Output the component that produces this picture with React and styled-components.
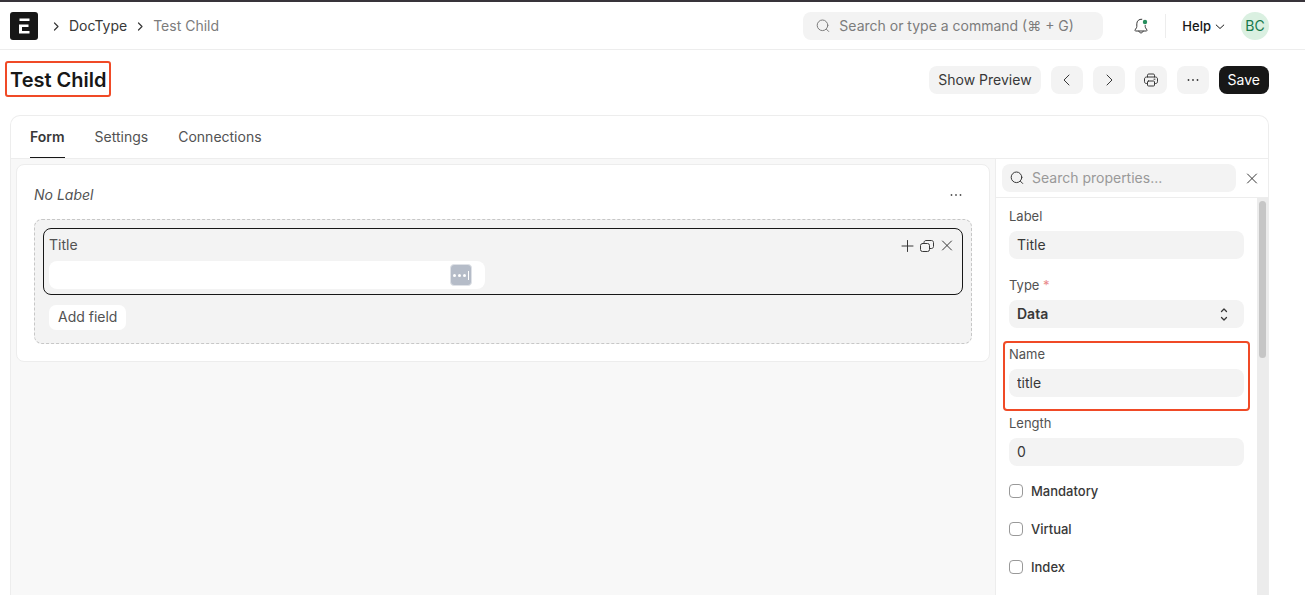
import {useId} from "react"
import styled, {createGlobalStyle} from "styled-components"

const GlobalStyle = createGlobalStyle`
  *, *::before, *::after {
    box-sizing: border-box;
  }

  body {
    margin: 0;
    background: #fff;
    color: #383838;
    font-family: Inter, "Liberation Sans", sans-serif;
    font-size: 14px;
    line-height: 18px;
  }

  button, input, select {
    font: inherit;
    color: inherit;
  }

  svg {
    display: block;
    flex: none;
  }
`

const Page = styled.div`
  display: flex;
  flex-direction: column;
  min-height: 100vh;
  border-top: 2px solid #38343a;
`

/* icons */

const Svg = ({size = 16, children, ...rest}) => (
  <svg
    width={size}
    height={size}
    viewBox="0 0 16 16"
    fill="none"
    stroke="currentColor"
    strokeLinecap="round"
    strokeLinejoin="round"
    aria-hidden="true"
    {...rest}
  >
    {children}
  </svg>
)

const SearchIcon = () => (
  <Svg>
    <circle cx="7.5" cy="7.3" r="5.3" />
    <path d="M11.5 11.3 13.700 13.500" />
  </Svg>
)

const CrumbIcon = () => (
  <Svg size={12} viewBox="0 0 12 12" strokeWidth="1.2">
    <path d="m4.5 3 3.5 3.5L4.500 10" />
  </Svg>
)

const LeftIcon = () => (
  <Svg>
    <path d="m10 3-5 5 5 5" />
  </Svg>
)

const RightIcon = () => (
  <Svg>
    <path d="m6 3 5 5-5 5" />
  </Svg>
)

const DownIcon = () => (
  <Svg size={10} viewBox="0 0 10 10">
    <path d="m1.2 4 3.8 3.500L8.800 4" />
  </Svg>
)

const BellIcon = () => (
  <Svg>
    <path d="M8.800 1.200C6 .9 3.800 3 3.800 5.800v2.700c0 .6-.2 1-.5 1.500L2.100 11.900c-.3.5 0 1.100.6 1.100h10.600c.6 0 .9-.6.6-1.100L12.700 10c-.3-.5-.5-.9-.5-1.500V7.500" />
    <path d="M5.800 13.200c.4 1.100 1.200 1.700 2.200 1.700s1.800-.6 2.200-1.700" />
    <circle cx="12" cy="4" r="2.200" fill="#278f5e" stroke="none" />
  </Svg>
)

const PrintIcon = () => (
  <Svg>
    <path d="M4.500 5V3.200c0-.7.5-1.200 1.200-1.200h4.600c.7 0 1.200.5 1.200 1.200V5" />
    <path d="M4.500 11.500H3.300c-1 0-1.800-.8-1.800-1.800V7c0-1.100.9-2 2-2h9c1.100 0 2 .9 2 2v2.700c0 1-.8 1.800-1.800 1.800h-1.200" />
    <rect x="4.500" y="9" width="7" height="5" rx="1" />
    <path d="M11 7.200h1" />
  </Svg>
)

const DotsIcon = () => (
  <Svg fill="currentColor" stroke="none">
    <circle cx="3.500" cy="8" r=".9" />
    <circle cx="8" cy="8" r=".9" />
    <circle cx="12.500" cy="8" r=".9" />
  </Svg>
)

const PlusIcon = () => (
  <Svg>
    <path d="M8.500 3.500v11M3 9h11" />
  </Svg>
)

const CopyIcon = () => (
  <Svg>
    <rect x="1.500" y="6.500" width="9" height="8" rx="2" />
    <path d="M5 6.300V5.500c0-1.100.9-2 2-2h5.500c1.100 0 2 .9 2 2v4c0 1.100-.9 2-2 2h-1.800" />
  </Svg>
)

const CloseIcon = () => (
  <Svg>
    <path d="m3.500 4 9 9m0-9-9 9" />
  </Svg>
)

const SelectIcon = () => (
  <Svg strokeWidth="1.300">
    <path d="m5.500 5.500 2.500-2.500 2.500 2.500M5.500 11.500 8 14l2.500-2.500" />
  </Svg>
)

const Logo = () => (
  <svg width="28" height="28" viewBox="0 0 28 28" aria-hidden="true">
    <rect width="28" height="28" rx="3" fill="#171717" />
    <path d="M9.500 6.500h10v2.500h-10zM9 12.500h9.500v2.500H12v4h7.500v2.500H9z" fill="#fff" />
  </svg>
)

/* navbar */

const Navbar = styled.header`
  display: flex;
  align-items: center;
  justify-content: space-between;
  height: 48px;
  padding: 0 36px 0 10px;
  border-bottom: 1px solid #ededed;
`

const NavGroup = styled.div`
  display: flex;
  align-items: center;
`

const Crumbs = styled.nav`
  display: flex;
  align-items: center;
  gap: 7px;
  margin-left: 12px;
`

const Crumb = styled.a`
  color: ${props => (props.$current ? "#7c7c7c" : "#383838")};
  text-decoration: none;
`

const NavSearch = styled.label`
  display: flex;
  align-items: center;
  gap: 8px;
  width: 300px;
  height: 28px;
  padding: 0 12px;
  border-radius: 8px;
  background: #f3f3f3;
  color: #7c7c7c;
`

const BareInput = styled.input`
  flex: 1;
  min-width: 0;
  padding: 0;
  border: 0;
  outline: 0;
  background: transparent;

  &::placeholder {
    color: ${props => props.$hint || "#7c7c7c"};
    opacity: 1;
  }
`

const PlainButton = styled.button.attrs({type: "button"})`
  display: flex;
  align-items: center;
  gap: 4px;
  padding: 0;
  border: 0;
  background: transparent;
`

const HelpButton = styled(PlainButton)`
  color: #171717;
  font-size: 13px;
  font-weight: 500;
`

const NavTools = styled.div`
  display: flex;
  align-items: center;
  gap: 16px;
  margin-left: 30px;
`

const Divider = styled.div`
  width: 1px;
  height: 24px;
  background: #ededed;
`

const Avatar = styled.button.attrs({type: "button"})`
  width: 28px;
  height: 28px;
  padding: 0;
  border: 0;
  border-radius: 50%;
  background: #daf0e1;
  color: #16794c;
`

/* page head */

const PageHead = styled.div`
  display: flex;
  align-items: center;
  justify-content: space-between;
  height: 60px;
  padding: 0 36px 0 5px;
`

const Title = styled.h1`
  margin: 0 0 2px;
  padding: 2px 3px 0;
  border: 2px solid #f04a26;
  border-radius: 3px;
  color: #171717;
  font-size: 20px;
  font-weight: 600;
  line-height: 30px;
`

const Actions = styled.div`
  display: flex;
  gap: 10px;
`

const Button = styled.button.attrs({type: "button"})`
  display: flex;
  align-items: center;
  justify-content: center;
  min-width: 32px;
  height: 28px;
  padding: 0 ${props => (props.$icon ? 8 : 9)}px;
  border: 0;
  border-radius: 8px;
  background: ${props => (props.$primary ? "#171717" : "#f3f3f3")};
  color: ${props => (props.$primary ? "#fff" : "#383838")};
`

/* form builder */

const Builder = styled.main`
  display: flex;
  flex: 1;
  flex-direction: column;
  margin: 5px 36px 0 10px;
  border: 1px solid #ededed;
  border-bottom: 0;
  border-radius: 10px 10px 0 0;
`

const Tabs = styled.div`
  display: flex;
  gap: 30px;
  padding: 0 19px;
  border-bottom: 1px solid #ededed;
`

const Tab = styled.button.attrs({type: "button", role: "tab"})`
  height: 42px;
  padding: 0;
  border: 0;
  border-bottom: 1px solid ${props => (props["aria-selected"] ? "#171717" : "transparent")};
  background: transparent;
  color: ${props => (props["aria-selected"] ? "#383838" : "#525252")};
  font-weight: ${props => (props["aria-selected"] ? 600 : 400)};
`

const Columns = styled.div`
  display: flex;
  flex: 1;
`

const Canvas = styled.div`
  flex: 1;
  min-width: 0;
  padding: 5px;
  background: #f8f8f8;
`

const Section = styled.section`
  padding: 17px;
  border: 1px solid #ededed;
  border-radius: 8px;
  background: #fff;
`

const SectionHead = styled.div`
  display: flex;
  align-items: center;
  justify-content: space-between;
  height: 26px;
  margin-bottom: 11px;
  padding-right: 8px;
  color: #525252;
  font-style: italic;
`

const Column = styled.div`
  padding: 8px;
  border: 1px dashed #c7c7c7;
  border-radius: 8px;
  background: #f3f3f3;
`

const FieldCard = styled.div`
  padding: 5px;
  border: 1px solid #171717;
  border-radius: 8px;
`

const FieldHead = styled.div`
  display: flex;
  align-items: center;
  justify-content: space-between;
  height: 22px;
  margin-bottom: 5px;
  color: #525252;
`

const FieldTools = styled.div`
  display: flex;
  gap: 4px;
  padding-right: 2px;
  color: #383838;
`

const FieldPreview = styled.div`
  display: flex;
  align-items: center;
  width: 48%;
  height: 28px;
  padding: 0 13px 0 8px;
  border-radius: 8px;
  background: #fff;
`

const FillBadge = styled.span`
  display: flex;
  align-items: center;
  justify-content: space-between;
  width: 22px;
  height: 22px;
  padding: 0 2px;
  border: 1px solid #dfe2e7;
  border-radius: 4px;
  background: #b5bcc8;
`

const BadgeDot = styled.i`
  width: 3px;
  height: 3px;
  border-radius: 50%;
  background: #fff;
`

const BadgeCaret = styled.i`
  width: 1px;
  height: 9px;
  background: #fff;
`

const AddButton = styled.button.attrs({type: "button"})`
  display: block;
  height: 25px;
  margin: 10px 6px 5px;
  padding: 0 9px 1px;
  border: 0;
  border-radius: 7px;
  background: #fff;
  color: #525252;
`

/* properties panel */

const Sidebar = styled.aside`
  display: flex;
  flex-direction: column;
  width: 273px;
  border-left: 1px solid #ededed;
`

const SidebarSearch = styled.div`
  display: flex;
  align-items: center;
  gap: 8px;
  height: 39px;
  padding: 0 8px 0 6px;
  border-bottom: 1px solid #ededed;
`

const PropertySearch = styled.label`
  display: flex;
  flex: 1;
  align-items: center;
  gap: 7px;
  min-width: 0;
  height: 28px;
  padding: 0 7px;
  border-radius: 8px;
  background: #f3f3f3;
`

const SidebarBody = styled.div`
  display: flex;
  flex: 1;
`

const Properties = styled.div`
  flex: 1;
  min-width: 0;
  padding: 9px 13px 0;
`

const ScrollTrack = styled.div`
  width: 11px;
  padding: 3px 2px;
  background: #ececec;
`

const ScrollThumb = styled.div`
  height: 157px;
  border-radius: 4px;
  background: #c6c6c6;
`

const Property = styled.div`
  position: relative;
  margin-bottom: 17px;
`

const Highlight = styled.div`
  position: absolute;
  inset: -4px -6px -14px;
  border: 2px solid #f04a26;
  border-radius: 4px;
  pointer-events: none;
`

const PropertyLabel = styled.label`
  display: block;
  margin-bottom: 6px;
  color: #525252;
  font-size: 13px;
`

const Required = styled.span`
  color: #e9898a;
`

const PropertyInput = styled.input`
  display: block;
  width: 100%;
  height: 28px;
  padding: 0 8px 2px;
  border: 0;
  border-radius: 8px;
  outline: 0;
  background: #f3f3f3;
`

const SelectBox = styled.div`
  display: grid;
  align-items: center;

  > * {
    grid-area: 1 / 1;
  }

  > svg {
    justify-self: end;
    margin-right: 12px;
    pointer-events: none;
  }
`

const PropertySelect = styled.select`
  width: 100%;
  height: 28px;
  padding: 0 8px;
  border: 0;
  border-radius: 8px;
  outline: 0;
  appearance: none;
  background: #f3f3f3;
  font-weight: 600;
`

const CheckRow = styled.label`
  display: flex;
  align-items: center;
  gap: 8px;
  height: 16px;
  margin-bottom: 22px;
  font-size: 13px;
  font-weight: 500;
`

const Checkbox = styled.input.attrs({type: "checkbox"})`
  width: 14px;
  height: 14px;
  margin: 0;
  border: 1px solid #999;
  border-radius: 4px;
  appearance: none;
  background: #fff;
`

const TextProperty = ({label, value, highlighted}) => {
  const id = useId()
  return (
    <Property>
      <PropertyLabel htmlFor={id}>{label}</PropertyLabel>
      <PropertyInput id={id} defaultValue={value} />
      {highlighted && <Highlight />}
    </Property>
  )
}

const TypeProperty = () => {
  const id = useId()
  return (
    <Property>
      <PropertyLabel htmlFor={id}>
        Type <Required>*</Required>
      </PropertyLabel>
      <SelectBox>
        <PropertySelect id={id} defaultValue="Data">
          <option>Data</option>
        </PropertySelect>
        <SelectIcon />
      </SelectBox>
    </Property>
  )
}

const TopNav = () => (
  <Navbar>
    <NavGroup>
      <Logo />
      <Crumbs aria-label="Breadcrumb">
        <CrumbIcon />
        <Crumb href="#doctype">DocType</Crumb>
        <CrumbIcon />
        <Crumb href="#test-child" $current>
          Test Child
        </Crumb>
      </Crumbs>
    </NavGroup>
    <NavGroup>
      <NavSearch>
        <SearchIcon />
        <BareInput aria-label="Search" placeholder="Search or type a command (⌘ + G)" />
      </NavSearch>
      <NavTools>
        <PlainButton aria-label="Notifications">
          <BellIcon />
        </PlainButton>
        <Divider />
        <HelpButton>
          Help
          <DownIcon />
        </HelpButton>
        <Avatar>BC</Avatar>
      </NavTools>
    </NavGroup>
  </Navbar>
)

const FormCanvas = () => (
  <Canvas>
    <Section>
      <SectionHead>
        No Label
        <PlainButton aria-label="Section options">
          <DotsIcon />
        </PlainButton>
      </SectionHead>
      <Column>
        <FieldCard>
          <FieldHead>
            Title
            <FieldTools>
              <PlainButton aria-label="Add">
                <PlusIcon />
              </PlainButton>
              <PlainButton aria-label="Duplicate">
                <CopyIcon />
              </PlainButton>
              <PlainButton aria-label="Remove">
                <CloseIcon />
              </PlainButton>
            </FieldTools>
          </FieldHead>
          <FieldPreview>
            <BareInput aria-label="Title" />
            <FillBadge>
              <BadgeDot />
              <BadgeDot />
              <BadgeDot />
              <BadgeCaret />
            </FillBadge>
          </FieldPreview>
        </FieldCard>
        <AddButton>Add field</AddButton>
      </Column>
    </Section>
  </Canvas>
)

const PropertiesPanel = () => (
  <Sidebar>
    <SidebarSearch>
      <PropertySearch>
        <SearchIcon />
        <BareInput aria-label="Search properties" placeholder="Search properties..." $hint="#999" />
      </PropertySearch>
      <PlainButton aria-label="Close">
        <CloseIcon />
      </PlainButton>
    </SidebarSearch>
    <SidebarBody>
      <Properties>
        <TextProperty label="Label" value="Title" />
        <TypeProperty />
        <TextProperty label="Name" value="title" highlighted />
        <TextProperty label="Length" value="0" />
        {["Mandatory", "Virtual", "Index"].map(name => (
          <CheckRow key={name}>
            <Checkbox />
            {name}
          </CheckRow>
        ))}
      </Properties>
      <ScrollTrack>
        <ScrollThumb />
      </ScrollTrack>
    </SidebarBody>
  </Sidebar>
)

const App = () => (
  <Page>
    <GlobalStyle />
    <TopNav />
    <PageHead>
      <Title>Test Child</Title>
      <Actions>
        <Button>Show Preview</Button>
        <Button $icon aria-label="Previous">
          <LeftIcon />
        </Button>
        <Button $icon aria-label="Next">
          <RightIcon />
        </Button>
        <Button $icon aria-label="Print">
          <PrintIcon />
        </Button>
        <Button $icon aria-label="Menu">
          <DotsIcon />
        </Button>
        <Button $primary>Save</Button>
      </Actions>
    </PageHead>
    <Builder>
      <Tabs role="tablist">
        <Tab aria-selected={true}>Form</Tab>
        <Tab aria-selected={false}>Settings</Tab>
        <Tab aria-selected={false}>Connections</Tab>
      </Tabs>
      <Columns>
        <FormCanvas />
        <PropertiesPanel />
      </Columns>
    </Builder>
  </Page>
)

export default App
